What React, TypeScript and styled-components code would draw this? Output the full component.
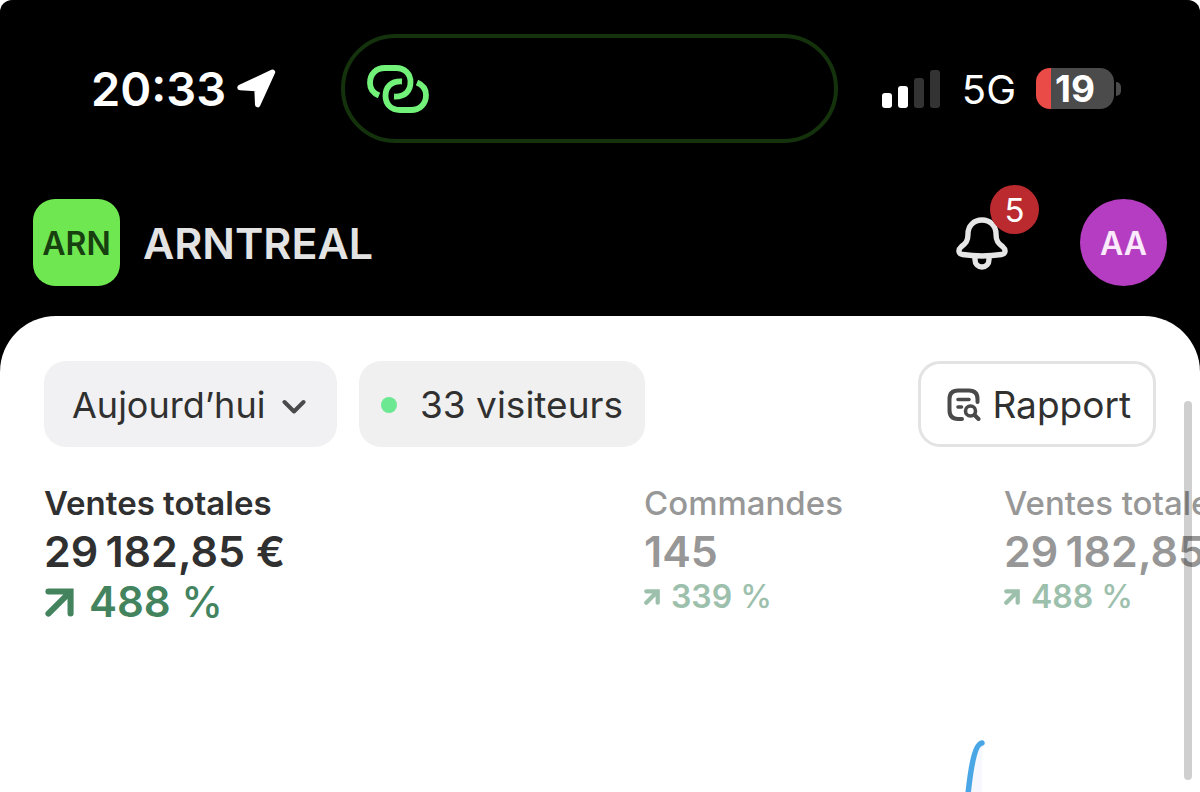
import React from "react";
import styled, { createGlobalStyle } from "styled-components";

const GlobalStyle = createGlobalStyle`
  *, *::before, *::after { box-sizing: border-box; }
  body {
    margin: 0;
    background: #fff;
    font-family: Inter, "Liberation Sans", sans-serif;
  }
  button, select { font: inherit; color: inherit; border: 0; background: none; margin: 0; }
  h1, p, dl, dt, dd { margin: 0; }
`;

const Screen = styled.div`
  display: flex;
  flex-direction: column;
  min-height: 100vh;
  overflow: hidden;
  border-radius: 12px 12px 0 0;
  background: #000;
`;

/* Status bar */

const StatusBar = styled.div`
  display: flex;
  align-items: center;
  margin-top: 34px;
  padding: 0 79px 0 91px;
  color: #fff;
`;

const Clock = styled.div`
  display: flex;
  align-items: center;
  gap: 11px;
  font-size: 47px;
  line-height: 56px;
  font-weight: 600;
`;

const Island = styled.div`
  flex: 1;
  height: 109px;
  margin: 0 44px 0 65px;
  padding: 0 22px;
  display: flex;
  align-items: center;
  border: 4px solid #14320c;
  border-radius: 55px;
`;

const StatusRight = styled.div`
  display: flex;
  align-items: center;
`;

const Signal = styled.div`
  display: flex;
  align-items: flex-end;
  gap: 6px;
`;

const SignalBar = styled.span<{ $height: number; $on?: boolean }>`
  width: 10px;
  height: ${(p) => p.$height}px;
  border-radius: 3px;
  background: ${(p) => (p.$on ? "#fff" : "#333")};
`;

const Network = styled.span`
  margin: 0 20px 0 22px;
  padding-top: 2px;
  font-size: 40px;
  line-height: 48px;
  font-weight: 400;
`;

const Battery = styled.div`
  display: flex;
  align-items: center;
  gap: 2px;
`;

const BatteryBody = styled.div`
  width: 78px;
  height: 41px;
  border-radius: 14px;
  background: linear-gradient(90deg, #eb4b46 19%, #4b4b4b 19%);
  font-size: 37px;
  line-height: 41px;
  font-weight: 700;
  text-align: center;
`;

const BatteryTip = styled.span`
  width: 5px;
  height: 14px;
  border-radius: 0 6px 6px 0;
  background: #4b4b4b;
`;

/* Store header */

const Header = styled.header`
  display: flex;
  align-items: center;
  margin: 56px 33px 30px;
`;

const StoreLogo = styled.div`
  width: 87px;
  height: 87px;
  display: grid;
  place-items: center;
  padding-top: 2px;
  border-radius: 22px;
  background: #6fe751;
  color: #173f0f;
  font-size: 32px;
  font-weight: 600;
`;

const StoreName = styled.h1`
  flex: 1;
  margin-left: 23px;
  color: #e3e3e3;
  font-size: 43px;
  line-height: 52px;
  font-weight: 600;
`;

const BellButton = styled.button`
  position: relative;
  display: flex;
  margin-right: 72px;
  padding: 0;
`;

const Badge = styled.span`
  position: absolute;
  left: 34px;
  top: -31px;
  width: 49px;
  height: 49px;
  border-radius: 50%;
  background: #bb2a2e;
  color: #fff;
  font-size: 33px;
  line-height: 50px;
  font-weight: 400;
  text-align: center;
`;

const Avatar = styled.button`
  width: 87px;
  height: 87px;
  padding: 2px 0 0;
  border-radius: 50%;
  background: #b53dc1;
  color: #fbe9fc;
  font-size: 32px;
  font-weight: 600;
`;

/* Sheet */

const Sheet = styled.main`
  position: relative;
  flex: 1;
  display: flex;
  flex-direction: column;
  padding-top: 45px;
  overflow: hidden;
  border-radius: 56px 56px 0 0;
  background: #fff;
`;

const Toolbar = styled.div`
  display: flex;
  gap: 22px;
  padding: 0 44px;
  color: #303030;
  font-size: 37px;
  line-height: 48px;
`;

const Period = styled.div`
  position: relative;
  height: 86px;
`;

const PeriodSelect = styled.select`
  appearance: none;
  height: 86px;
  padding: 2px 71px 0 28px;
  border-radius: 22px;
  background: #f1f1f3;
  font-size: 36px;
`;

const PeriodChevron = styled.svg`
  position: absolute;
  right: 31px;
  top: 38px;
  pointer-events: none;
`;

const Visitors = styled.div`
  height: 86px;
  display: flex;
  align-items: center;
  gap: 23px;
  padding: 2px 22px 0;
  border-radius: 22px;
  background: #f0f0f0;
`;

const LiveDot = styled.span`
  width: 16px;
  height: 16px;
  border-radius: 50%;
  background: #6ce893;
`;

const ReportButton = styled.button`
  height: 86px;
  display: flex;
  align-items: center;
  gap: 11px;
  margin-left: auto;
  padding: 2px 22px 0 26px;
  border: 3px solid #e3e3e3;
  border-radius: 22px;
`;

const Metrics = styled.div`
  display: flex;
  margin-top: 36px;
  padding-left: 44px;
`;

const Metric = styled.dl<{ $active?: boolean }>`
  flex: none;
  width: ${(p) => (p.$active ? 600 : 360)}px;
  color: ${(p) => (p.$active ? "#303030" : "#979797")};
  white-space: nowrap;
`;

const MetricLabel = styled.dt<{ $active?: boolean }>`
  font-size: 33px;
  line-height: 40px;
  font-weight: ${(p) => (p.$active ? 600 : 500)};
`;

const MetricValue = styled.dd`
  font-size: 43px;
  line-height: 57px;
  font-weight: 600;
`;

const MetricDelta = styled.dd<{ $active?: boolean }>`
  display: flex;
  align-items: center;
  gap: ${(p) => (p.$active ? 14 : 11)}px;
  color: ${(p) => (p.$active ? "#43845f" : "#9dc0ad")};
  font-size: ${(p) => (p.$active ? 42 : 32)}px;
  line-height: ${(p) => (p.$active ? 44 : 34)}px;
  font-weight: 600;
`;

const Percent = styled.span`
  font-weight: 500;
`;

const Chart = styled.svg`
  display: block;
  margin: auto 213px 0 auto;
`;

const ScrollThumb = styled.div`
  position: absolute;
  top: 85px;
  right: 8px;
  bottom: 12px;
  width: 8px;
  border-radius: 4px;
  background: rgba(0, 0, 0, 0.19);
`;

const LocationIcon = () => (
  <svg width="39" height="39" viewBox="0 0 39 39" aria-hidden="true">
    <path d="M3 18.5 35.5 3.2 20.7 35.6 20 19.5Z" fill="#fff" stroke="#fff" strokeWidth="5.4" strokeLinejoin="round" />
  </svg>
);

const LinkIcon = () => (
  <svg width="62" height="48" viewBox="0 0 62 48" fill="none" stroke="#72f279" strokeWidth="5.8" aria-hidden="true">
    <path d="M12 30.5C6 28 3 23.5 3 18C3 9 9 3 18 3H29C38 3 43.5 9 43.5 17C43.5 26 38 32 27 31.5" />
    <path d="M50 17.5C56 20 59 24.5 59 30C59 39 53 45 44 45H33C24 45 18.5 39 18.5 31C18.5 22 24 16 35 16.5" />
  </svg>
);

const BellIcon = () => (
  <svg width="52" height="54" viewBox="0 0 52 54" fill="none" stroke="#e6e6e6" strokeWidth="5.4" strokeLinejoin="round" aria-hidden="true">
    <path d="M12 18C12 9.5 18 4 26 4S40 9.5 40 18C40 25.5 42.5 27.5 46.5 30.5C50.5 34 49.5 38 45.5 38.5C32 40.5 20 40.5 6.5 38.500C2.5 38 1.5 34 5.5 30.5C9.5 27.5 12 25.5 12 18Z" />
    <path d="M19 40.5V43.5C19 48 22 51 26 51S33 48 33 43.5V40.5" />
  </svg>
);

const ReportIcon = () => (
  <svg width="34" height="34" viewBox="0 0 34 34" fill="none" stroke="#4a4a4a" strokeWidth="4" strokeLinecap="round" aria-hidden="true">
    <path d="M30.5 14V11C30.5 5.5 27.5 2.5 22 2.5H11C5.5 2.5 2.5 5.5 2.5 11V22C2.5 28 5.5 31 11 31H15" />
    <path d="M11 11.5H22M11 19H14.500" strokeWidth="3.6" />
    <circle cx="23.5" cy="23" r="5" strokeWidth="3.6" />
    <path d="M27.5 27 31.5 31" />
  </svg>
);

const TrendIcon = ({ size, color }: { size: number; color: string }) => (
  <svg width={size} height={size} viewBox="0 0 28 28" fill="none" stroke={color} strokeWidth={size > 20 ? 5.5 : 7.5} strokeLinecap="round" aria-hidden="true">
    <path d="M4 4H24V24M23 5 4 24" />
  </svg>
);

const metrics = [
  { label: "Ventes totales", value: "29\u2009182,85 €", delta: "488", active: true },
  { label: "Commandes", value: "145", delta: "339" },
  { label: "Ventes totales", value: "29\u2009182,85 €", delta: "488" },
];

export default function App() {
  return (
    <>
      <GlobalStyle />
      <Screen>
        <StatusBar>
          <Clock>
            20:33
            <LocationIcon />
          </Clock>
          <Island>
            <LinkIcon />
          </Island>
          <StatusRight>
            <Signal>
              <SignalBar $height={15} $on />
              <SignalBar $height={22} $on />
              <SignalBar $height={30} />
              <SignalBar $height={38} />
            </Signal>
            <Network>5G</Network>
            <Battery>
              <BatteryBody>19</BatteryBody>
              <BatteryTip />
            </Battery>
          </StatusRight>
        </StatusBar>

        <Header>
          <StoreLogo>ARN</StoreLogo>
          <StoreName>ARNTREAL</StoreName>
          <BellButton aria-label="Notifications">
            <BellIcon />
            <Badge>5</Badge>
          </BellButton>
          <Avatar>AA</Avatar>
        </Header>

        <Sheet>
          <Toolbar>
            <Period>
              <PeriodSelect aria-label="Période">
                <option>Aujourd’hui</option>
              </PeriodSelect>
              <PeriodChevron width="24" height="16" viewBox="0 0 24 16" fill="none" stroke="#4a4a4a" strokeWidth="4" strokeLinecap="round" strokeLinejoin="round">
                <path d="M2.5 3 12 12.5 21.5 3" />
              </PeriodChevron>
            </Period>
            <Visitors>
              <LiveDot />
              33 visiteurs
            </Visitors>
            <ReportButton>
              <ReportIcon />
              Rapport
            </ReportButton>
          </Toolbar>

          <Metrics>
            {metrics.map((m, i) => (
              <Metric key={i} $active={m.active}>
                <MetricLabel $active={m.active}>{m.label}</MetricLabel>
                <MetricValue>{m.value}</MetricValue>
                <MetricDelta $active={m.active}>
                  <TrendIcon size={m.active ? 31 : 16} color={m.active ? "#43845f" : "#9dc0ad"} />
                  <span>
                    {m.delta} <Percent>%</Percent>
                  </span>
                </MetricDelta>
              </Metric>
            ))}
          </Metrics>

          <Chart width="24" height="54" viewBox="0 0 24 54" fill="none" aria-hidden="true">
            <path d="M5 54C8 26 12 6 19 5V54Z" fill="#f6f8fd" />
            <path d="M5 56C8 28 12 6 19 5" stroke="#4ba6e6" strokeWidth="5.5" strokeLinecap="round" />
          </Chart>
          <ScrollThumb />
        </Sheet>
      </Screen>
    </>
  );
}
